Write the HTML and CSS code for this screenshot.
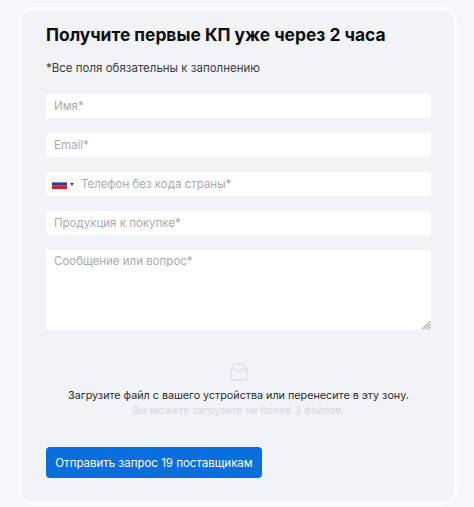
FILE: index.html
```html
<!DOCTYPE html>
<html lang="ru">
<head>
  <meta charset="UTF-8">
  <meta name="viewport" content="width=device-width, initial-scale=1.0">
  <title>Запрос поставщикам</title>
  <link rel="stylesheet" href="styles.css">
</head>
<body>

  <form class="request-card">
    <h1>Получите первые КП уже через 2 часа</h1>
    <p class="note">*Все поля обязательны к заполнению</p>

    <div class="field">Имя*</div>
    <div class="field">Email*</div>
    <div class="field phone-field">
      <svg class="flag" viewBox="0 0 15 10" width="15" height="10">
        <rect width="15" height="3.4" fill="#f4f4f6"/>
        <rect y="3.4" width="15" height="3.3" fill="#2b3f9a"/>
        <rect y="6.7" width="15" height="3.3" fill="#d5202e"/>
      </svg>
      <span class="flag-arrow"></span>
      <span>Телефон без кода страны*</span>
    </div>
    <div class="field">Продукция к покупке*</div>
    <div class="field message-field">
      Сообщение или вопрос*
      <svg class="resize-grip" viewBox="0 0 10 10" width="10" height="10">
        <path d="M1 9.5 9.5 1M4 9.5 9.5 4M7 9.5 9.5 7" stroke="#77797d" stroke-width="1" fill="none"/>
      </svg>
    </div>

    <div class="upload-zone">
      <svg class="upload-icon" viewBox="0 0 20 20" width="18" height="18">
        <path d="M1.5 7 4.5 1.5H15.5L18.5 7V18.5H1.5Z M1.5 7H6.5L10 10 13.500 7H18.5" stroke="#dcdde0" stroke-width="1.400" fill="none" stroke-linejoin="round"/>
      </svg>
      <p class="upload-text">Загрузите файл с вашего устройства или перенесите в эту зону.</p>
      <p class="upload-limit">Вы можете загрузите не более 3 файлов.</p>
    </div>

    <button class="submit-button" type="button">Отправить запрос 19 поставщикам</button>
  </form>

</body>
</html>
```

FILE: styles.css
```css
body {
  font-family: 'Inter', 'Noto Sans', sans-serif;
  background-color: #f6f7fb;
  margin: 0;
  padding: 7px 17px 2px 18px;
  height: 507px;
  box-sizing: border-box;
  overflow: hidden;
}

.request-card {
  background: #f1f3f7;
  border: 3px solid #fbfcfe;
  border-radius: 15px;
  height: 498px;
  box-sizing: border-box;
  padding: 13px 23px 0 25px;
}

h1 {
  margin: 0;
  font-size: 17.400px;
  line-height: 24px;
  font-weight: 700;
  color: #0d0d10;
}

.note {
  margin: 12px 0 17px;
  font-size: 11.500px;
  line-height: 18px;
  color: #3a3b40;
}

.field {
  background: #ffffff;
  border-radius: 3px;
  height: 24px;
  margin-bottom: 15px;
  padding: 0 8px;
  display: flex;
  align-items: center;
  font-size: 11.500px;
  color: #a9abb0;
}

.phone-field {
  padding-left: 6px;
}

.flag {
  flex: none;
}

.flag-arrow {
  border-left: 2px solid transparent;
  border-right: 2px solid transparent;
  border-top: 3px solid #444;
  margin: 0 7px 0 3px;
}

.message-field {
  position: relative;
  height: 80px;
  align-items: flex-start;
  padding-top: 4px;
  box-sizing: border-box;
  margin-bottom: 0;
}

.resize-grip {
  position: absolute;
  right: 0;
  bottom: 0;
}

.upload-zone {
  text-align: center;
  padding-top: 33px;
}

.upload-icon {
  display: block;
  margin: 0 auto 7px;
}

.upload-text {
  margin: 0;
  font-size: 10.750px;
  line-height: 16px;
  color: #2b2c31;
}

.upload-limit {
  margin: 0;
  font-size: 10.500px;
  line-height: 14px;
  color: #d5d7dc;
}

.submit-button {
  display: block;
  margin-top: 29px;
  width: 216px;
  height: 31px;
  border: none;
  border-radius: 4px;
  background-color: #0a6fde;
  color: #ffffff;
  font-family: inherit;
  font-size: 11.500px;
  padding: 0;
  cursor: pointer;
}
```
